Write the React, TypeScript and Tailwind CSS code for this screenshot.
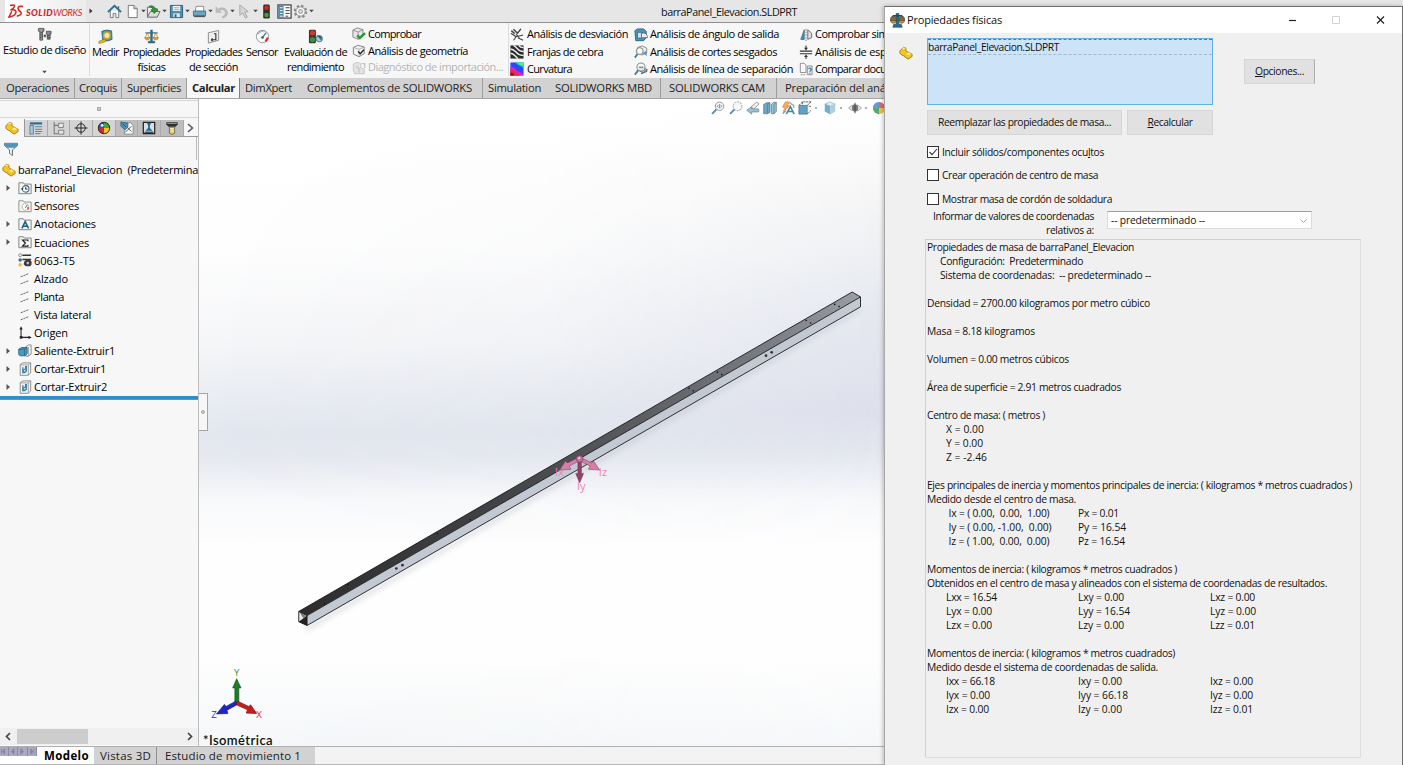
import React, { useLayoutEffect, useRef } from "react";

/* Single-line label whose letter spacing is tuned so it takes exactly `w` pixels. */
function Fit({ w, className = "", children }: { w: number; className?: string; children: React.ReactNode }) {
  const ref = useRef<HTMLSpanElement>(null);
  useLayoutEffect(() => {
    const el = ref.current;
    if (!el) return;
    el.style.letterSpacing = "0px";
    const n = (el.textContent || "").length;
    if (n > 0) el.style.letterSpacing = (w - el.getBoundingClientRect().width) / n + "px";
  }, [w, children]);
  return (
    <span ref={ref} className={"inline-block shrink-0 whitespace-pre " + className}>
      {children}
    </span>
  );
}

const ICONS: Record<string, React.ReactNode> = {
  home: (<g fill="none"><path d="M3.5 7.5V14.5H6.5V10H9.5V14.5H12.5V7.5" fill="#fafafa" stroke="#777" /><path d="M1 8.5L8 2L15 8.5" stroke="#2d6f90" strokeWidth="2" /><path d="M12.2 2.5V5" stroke="#555" strokeWidth="1.5" /></g>),
  page: (<g fill="#fdfdfd" stroke="#777"><path d="M3.5 1.5H9.5L13 5V14.5H3.5Z" /><path d="M9.5 1.5V5H13" fill="#ccc" /></g>),
  open: (<g><path d="M1.5 3.5H6L7 5H12V13.5H1.5Z" fill="#eee" stroke="#666" /><path d="M4.5 8H15L12 14H1.5Z" fill="#ddd" stroke="#666" /><path d="M3 2.5C7 1 10 3 10 6H12.5L8.8 10.2L5.2 6H7.4C7 4 5.5 3 3 2.5Z" fill="#2e9a35" stroke="#176020" strokeWidth=".6" /></g>),
  save: (<g><path d="M1.5 1.5H14.5V14.5H1.5Z" fill="#4a8fb3" stroke="#28607f" /><path d="M4 2H12V7.5H4Z" fill="#f4f4f4" /><path d="M5 4H11M5 6H11" stroke="#888" strokeWidth=".7" /><path d="M4.5 10H11.5V14H4.5Z" fill="#dce8ee" /><path d="M6 11H8V14H6Z" fill="#28607f" /></g>),
  print: (<g><path d="M4.5 2.5H12.5V8H3.5Z" fill="#fff" stroke="#888" /><path d="M1.5 7.5H14.5V12.5H1.5Z" fill="#6aa5c4" stroke="#3d738f" /><path d="M2 12.5H14V14H2Z" fill="#555" /></g>),
  undo: (<path d="M2 3V9H8L6 6.8C9 5 12 6.5 12 9.5C12 11.5 10.5 12.8 9 13.2V15C12.5 14.5 14.6 12 14.4 9C14 4.5 8.5 2.5 4.4 5.4Z" fill="#bdbdbd" stroke="#aaa" strokeWidth=".4" />),
  cursor: (<path d="M3 1V12L6 9.5L9 15L11 14L8.3 8.5L12 8Z" fill="#d6d6d6" stroke="#9a9a9a" strokeWidth=".8" />),
  traffic: (<g><rect x="4.5" y=".5" width="7" height="15" rx="1.5" fill="#3c2a28" /><circle cx="8" cy="4" r="2.4" fill="#d42a20" /><circle cx="8" cy="11.8" r="2.4" fill="#2faa3a" /></g>),
  options: (<g><rect x="1" y="1" width="14" height="14" fill="#fff" stroke="#333" strokeWidth="1.2" /><path d="M1.5 1.5H7V14.5H1.5Z" fill="#4d88a8" /><path d="M3 4H6M3 7H6M3 10H6M3 13H6" stroke="#fff" /><path d="M9 4H13.5M9 7H13.5M9 10H13.5M9 13H12" stroke="#333" /></g>),
  gear: (<g fill="none"><circle cx="8" cy="8" r="6" stroke="#8a8a8a" strokeWidth="2.4" strokeDasharray="2.5 2.2" /><circle cx="8" cy="8" r="5" fill="#f3f3f3" stroke="#888" /><circle cx="8" cy="8" r="2" stroke="#888" fill="#e4e4e4" /></g>),
  bolts: (<g fill="#6d6d6d" stroke="#333" strokeWidth=".7"><path d="M1.5 1.5H7.5V4.5H6V14H3V4.5H1.5Z" fill="#9a9a9a" /><path d="M3 6.5L6 5.5M3 9L6 8M3 11.5L6 10.5" /><path d="M10 4.5H15V7.5H14V13H11V7.5H10Z" fill="#8a8a8a" /><path d="M11 9.5L14 8.5M11 12L14 11" /><path d="M7 9.5H10M8.5 8V11" stroke="#222" strokeWidth="1" /></g>),
  tape: (<g><path d="M4 2.5Q9 0 14.5 2L15 11Q11 14 5 12Z" fill="#4d97bd" stroke="#27566e" strokeWidth=".8" /><circle cx="9.5" cy="7" r="3.4" fill="#f5e9a8" stroke="#d3a81d" strokeWidth="1.4" /><path d="M1 13L8 10.5V13.5L1 15.5Z" fill="#e8b923" stroke="#8f6d0c" strokeWidth=".6" /></g>),
  scale: (<g><path d="M7 1H9V13H11.5V15H4.5V13H7Z" fill="#2d6d91" stroke="#1d4a63" strokeWidth=".4" /><path d="M1.5 4.2H14.5" stroke="#2d6d91" strokeWidth="1.4" /><path d="M3.5 4.5L1 9.5H6ZM12.5 4.5L10 9.5H15Z" fill="none" stroke="#c48a17" strokeWidth=".8" /><path d="M.6 9.2H6.4Q5.8 11.8 3.5 11.8T.6 9.2M9.6 9.2H15.4Q14.8 11.8 12.5 11.8T9.6 9.2" fill="#e0a32b" stroke="#8a600f" strokeWidth=".4" /></g>),
  scaleDark: (<g><path d="M6.5 .5H9.5V12H12L13 15.2H3L4 12H6.5Z" fill="#2a6c94" stroke="#123d55" strokeWidth=".6" /><path d="M3 3H13" stroke="#1b4c69" strokeWidth="1.8" /><path d="M3.5 3A3.6 4.2 0 0 0 .6 8.5H6.6A3.6 4.2 0 0 0 3.5 3ZM12.5 3A3.6 4.2 0 0 0 9.6 8.5H15.5A3.6 4.2 0 0 0 12.5 3Z" fill="#7c6a4a" stroke="#333" strokeWidth=".6" /><path d="M.4 8H6.8Q6 11 3.5 11T.4 8M9.3 8H15.7Q15 11 12.5 11T9.3 8" fill="#c39440" stroke="#4b3a18" strokeWidth=".5" /></g>),
  section: (<g><path d="M2.5 4L13.5 1.5V12L2.5 15Z" fill="#efefef" stroke="#8a8a8a" /><path d="M5.5 11.5H10.5V5H8.5M5.5 11.5L7 10M5.5 11.5L7 13" fill="none" stroke="#333" strokeWidth="1.2" /></g>),
  gauge: (<g><circle cx="8" cy="8" r="6.6" fill="#fafafa" stroke="#999" strokeWidth="1" /><path d="M2.8 5.5A6 6 0 0 1 10 2.6" fill="none" stroke="#5f9ab8" strokeWidth="1.8" strokeDasharray="1.5 1" /><path d="M13.6 9A6 6 0 0 1 11 13" fill="none" stroke="#d8342c" strokeWidth="2.4" /><path d="M8 9L12 3.8" stroke="#3c7fa3" strokeWidth="1.5" /><circle cx="8" cy="9" r="1.4" fill="#555" /></g>),
  perf: (<g><rect x="1" y=".8" width="7.4" height="14.5" rx="1.4" fill="#46322e" /><circle cx="4.7" cy="4.2" r="2.7" fill="#d5382c" /><circle cx="4.7" cy="11.4" r="2.7" fill="#2d9d3c" /><circle cx="12" cy="10.3" r="3.4" fill="#a9cbdc" stroke="#447790" /><path d="M9 6.5L14.5 12.5V8Z" fill="#2c6080" /></g>),
  check: (<g><path d="M1 3.5L6 1L12.5 3V10.5L7 14L1 11.5Z" fill="#e6e6e6" stroke="#666" strokeWidth=".8" /><path d="M1 3.5L7 5.8L12.5 3M7 5.8V14" fill="none" stroke="#777" strokeWidth=".8" /><path d="M6 9.5L9 12.5L15 7" fill="none" stroke="#2c9b31" strokeWidth="3" /></g>),
  geom: (<g><path d="M1.5 4L7 1.5L14 3.5V11L8 14.5L1.5 11.5Z" fill="#f3f3f3" stroke="#666" strokeWidth=".9" /><path d="M1.5 4L8 6L14 3.5M8 6V14.5" fill="none" stroke="#999" strokeWidth=".8" /><path d="M7 8.5L9.5 11L13.5 6.5" fill="none" stroke="#222" strokeWidth="1.6" /></g>),
  diag: (<g fill="#e3e3e3" stroke="#c4c4c4"><path d="M1.5 3.5L6 1.5L10 3V8L14 9V14.5H3L1.5 11Z" /><path d="M5 6L8 9V13M11 3H14.5V8" fill="none" strokeWidth="1.6" /></g>),
  deviation: (<g stroke="#444" fill="none"><path d="M1 6L7 10L4 14M7 10L15 8" strokeWidth="1.3" /><path d="M4 1.5L8.5 6M1.5 3L5.5 6.5M12.5 1L8 6.5" strokeWidth="1.7" /><path d="M9.5 11.5L15 14M7 7L11 12" strokeWidth="1.3" /></g>),
  zebra: (<g><path d="M.5 .5H15.5V15.5H.5Z" fill="#2b2b2b" /><path d="M.5 4.5C5 4.5 6 8 9.5 10.5C12 12 14 12 15.5 12M4 .5C7 2 9 5.5 11 6.5S14 7.5 15.5 7.5M.5 9.5C4 9.5 5.5 12.5 9 15.5M10 .5C11.5 2.5 13.5 3 15.5 3" fill="none" stroke="#eee" strokeWidth="1.7" /></g>),
  curvature: (<g><path d="M.5 .5H15.5V15.5H.5Z" fill="#2b4df0" /><path d="M.5 .5H7C8 4 12 3 15.5 7V.5H7" fill="#16d5f5" /><path d="M9 .5H15.5V4Q11 4 9 .5" fill="#5ff36a" /><path d="M.5 5C6 5 6 10 10 11S14 13 15.5 15.5H.5Z" fill="#d81fe8" /><path d="M.5 8C4 8 5 11 8 12.5S10 14 10.5 15.5H.5Z" fill="#f0283a" /><path d="M.5 12Q4 12 5 15.5H.5Z" fill="#7c1d12" /></g>),
  draft: (<g><path d="M1 3L4 1H11L14 4V11L11 14.5H2Z" fill="#4e94b8" stroke="#2b5f7b" /><path d="M4 5H9V11.5H4Z" fill="#cfe2ec" stroke="#2b5f7b" strokeWidth=".8" /><path d="M8.5 6Q15 4.5 15.5 11H8.5Z" fill="#eee" stroke="#555" strokeWidth=".8" /></g>),
  undercut: (<g><path d="M4 3L9 1L14.5 3.5V9L9 11.5L4 9Z" fill="#eee" stroke="#777" strokeWidth=".9" /><circle cx="6.5" cy="7" r="4" fill="#f5fafc" fillOpacity=".8" stroke="#777" /><path d="M4 10.5L1 14.5" stroke="#3f83a5" strokeWidth="2.2" /><path d="M9.5 9L14.5 6.5V12.5Z" fill="#5a9cbc" /></g>),
  parting: (<g><path d="M5 9L10 6L15.5 9L10 12.5Z" fill="#9ec4d6" stroke="#555" strokeWidth=".9" /><circle cx="8" cy="5.8" r="4.6" fill="#f7f9fa" fillOpacity=".75" stroke="#777" /><path d="M4.8 9.5L1 14.5" stroke="#3f83a5" strokeWidth="2.2" /><path d="M8 13.5L15 10.5M5.5 6H10.5" stroke="#666" strokeWidth="1.3" /></g>),
  symmetry: (<g><path d="M2 13L6 2V13Z" fill="#4b93b9" stroke="#2b5f7b" strokeWidth=".8" /><path d="M8 1V15" stroke="#777" strokeDasharray="2 1" /><path d="M10 2L14.5 6V11L10 13Z" fill="#ddd" stroke="#555" strokeWidth=".9" /></g>),
  thickness: (<g stroke="#333" fill="#333"><path d="M1 7H15M1 10H15" strokeWidth="1.3" /><path d="M8 .5V4M8 16V13" strokeWidth="1.2" /><path d="M5.8 3.2H10.2L8 6.2ZM5.8 13.8H10.2L8 10.8Z" stroke="none" /></g>),
  compare: (<g><path d="M1.5 1.5H6L8 3.5V12H1.5Z" fill="#f7f7f7" stroke="#888" /><path d="M9.5 4.5H15V14.5H9.5Z" fill="#e5eef3" stroke="#888" /><path d="M11 8Q12.5 6 13.6 7.6T12.2 11M12.2 12.3V13.3" stroke="#2d7196" strokeWidth="1.3" fill="none" /><path d="M2 14.5H8" stroke="#888" strokeDasharray="2 1" /></g>),
  part: (<g><path d="M1 5.5L3 3.5L5 1.5L8 2.5V5.5L10.5 7L15 9.5V12L10.5 15L6.5 12.5V11.5L4.5 11L1 8.5Z" fill="#f5c61d" stroke="#8a6505" strokeWidth=".8" /><path d="M5 1.5L8 2.5L5.5 4.5L3 3.5ZM10.5 7L14.8 9L10.8 11.2L6.8 9Z" fill="#fdea87" stroke="#c9990f" strokeWidth=".4" /></g>),
  props: (<g><path d="M1 1.5H15V4H1Z" fill="#2e6e90" /><path d="M1 5H5V15H1Z" fill="#a9c8d8" stroke="#2e6e90" strokeWidth=".8" /><path d="M7 6.5H15M7 9.5H15M7 12H15M7 14.5H13" stroke="#3b7fa2" /></g>),
  config: (<g fill="none" stroke="#777"><path d="M2.5 1V14.5H7M2.5 5H7" strokeWidth="1.2" /><path d="M7.5 2.5H14M7.5 2.5V7.5H13V4" fill="#e8e8e8" /><path d="M7.5 10.5H13.5V15H7.5Z" fill="#e8e8e8" /></g>),
  target: (<g fill="none" stroke="#222" strokeWidth="1.1"><circle cx="8" cy="8" r="4.8" /><path d="M8 .5V15.5M.5 8H15.5" /></g>),
  ball: (<g><circle cx="8" cy="8" r="6.8" fill="#222" /><path d="M8 8L1.2 8A6.8 6.8 0 0 1 8 1.2Z" fill="#2f57b0" /><path d="M8 1.2A6.8 6.8 0 0 1 14.8 8H8Z" fill="#3aa745" /><path d="M14.8 8A6.8 6.8 0 0 1 8 14.8V8Z" fill="#f0c52a" /><path d="M8 14.8A6.8 6.8 0 0 1 1.2 8L8 8Z" fill="#c7302c" /><circle cx="5.8" cy="5" r="1.7" fill="#dfe8f7" /><circle cx="8" cy="8" r="6.5" fill="none" stroke="#222" strokeWidth=".9" /></g>),
  ballLight: (<g><circle cx="8" cy="8" r="7" fill="#ddd" /><path d="M8 8H1A7 7 0 0 1 8 1Z" fill="#5a8bd6" /><path d="M8 1A7 7 0 0 1 15 8H8Z" fill="#e4555c" /><path d="M15 8A7 7 0 0 1 8 15V8Z" fill="#f1b93c" /><path d="M8 15A7 7 0 0 1 1 8H8Z" fill="#43a457" /></g>),
  simx: (<g><path d="M5 2H12L15 5V15H5Z" fill="#f6f6f6" stroke="#888" /><path d="M1 1L9 2.5V7L6 10L1 6Z" fill="#4b93b9" stroke="#22566f" strokeWidth=".8" /><path d="M6 13L13 6M9 8L13 12M3 3L7 7" stroke="#333" strokeWidth=".9" /></g>),
  stamp: (<g><path d="M1.5 1.5H14.5V14.5H1.5Z" fill="#d7e0e5" stroke="#222" strokeWidth="1.4" /><path d="M5.5 2H10.5L9 5V8L12 11H4L7 8V5Z" fill="#24668c" /><path d="M3 12.8H13" stroke="#222" strokeWidth="1.3" /></g>),
  torch: (<g><path d="M1.5 1.5H14.5V4L12 6.5H4L1.5 4Z" fill="#2f2f2f" /><path d="M2.5 2.7H13.5" stroke="#aaa" /><path d="M5 7H11V14L8 15.5L5 14Z" fill="#e7c95a" stroke="#555" strokeWidth=".8" /><path d="M6 9H10M7 11.5H10" stroke="#fff" /></g>),
  filter: (<g><path d="M.5 1.5H15.5V4L9.7 9V15.5L6.3 13V9L.5 4Z" fill="#e3edf2" stroke="#555" strokeWidth=".9" /><path d="M1 2H15V4L12 6.5H4L1 4Z" fill="#4e96ba" /></g>),
  folderHist: (<g><path d="M1 14.5V2H6L7 3.5H15V14.5Z" fill="#f4f4f4" stroke="#777" /><circle cx="8.8" cy="9" r="3.7" fill="#fff" stroke="#2d6584" strokeWidth="1.2" /><path d="M8.8 7V9.3H10.8" stroke="#222" fill="none" strokeWidth="1.1" /><path d="M3 8.5L4.8 10.2L6.4 8.5" fill="#222" /></g>),
  folderSens: (<g><path d="M1 14.5V2H6L7 3.5H15V14.5Z" fill="#f4f4f4" stroke="#888" /><circle cx="8.4" cy="9" r="3.7" fill="#fff" stroke="#888" strokeDasharray="1.5 .8" /><path d="M8.4 10L10.5 6.8" stroke="#444" /><path d="M11.6 9V12" stroke="#d8342c" strokeWidth="1.6" /></g>),
  folderA: (<g><path d="M1 14.5V2H6L7 3.5H15V14.5Z" fill="#f4f4f4" stroke="#777" /><path d="M4.5 13L8.2 5.2L12 13M5.8 10.5H10.6" fill="none" stroke="#235e80" strokeWidth="1.8" /></g>),
  folderSum: (<g><path d="M1 14.5V2H6L7 3.5H15V14.5Z" fill="#f4f4f4" stroke="#777" /><path d="M11.3 7V5.7H5.2L8.4 9.2L5.2 12.6H11.3V11.3" fill="none" stroke="#222" strokeWidth="1.4" /></g>),
  material: (<g><circle cx="2.5" cy="2.5" r="1.7" fill="#eee" stroke="#777" strokeWidth=".8" /><circle cx="2.5" cy="8" r="2" fill="#2d7196" /><circle cx="2.5" cy="13.4" r="2" fill="#f0c02a" /><path d="M5 2.5H15M5 7.5H15" stroke="#333" strokeWidth="1.6" /><path d="M7 10L9 8H14L15.5 10V13L14 15.2H9L6.5 13Z" fill="#3d3d3d" /><circle cx="11.2" cy="11.5" r="1.6" fill="#bbb" /></g>),
  plane: (<path d="M3 5.5L12 2M3 13.5L12 10" fill="none" stroke="#666" strokeWidth="1.1" strokeDasharray="2.6 .8" />),
  origin: (<g fill="#222" stroke="#222"><path d="M3.5 3V13H13" fill="none" strokeWidth="1.2" /><path d="M3.5 .3L5.4 4H1.6ZM15.7 13L12 14.9V11.1Z" stroke="none" /><rect x="2" y="11.5" width="3" height="3" stroke="none" /></g>),
  extrude: (<g><path d="M9 3L12 1H15V11.5L11.5 14H9Z" fill="#f1f1f1" stroke="#777" strokeWidth=".9" /><path d="M12 3.5V13.5" stroke="#888" strokeWidth=".8" /><path d="M.8 6L4 4H10.5V11L8 13.5H2.5L.8 12Z" fill="#4b98bf" stroke="#23607f" strokeWidth=".9" /><path d="M.8 6H7.5V13.5M7.5 6L10.5 4" fill="none" stroke="#23607f" strokeWidth=".8" /></g>),
  cut: (<g><path d="M2.5 3L5.5 1H14.5V12.5L11.5 15.2H2.5Z" fill="#f1f1f1" stroke="#777" strokeWidth=".9" /><path d="M11.8 15V3.3H2.5M11.8 3.3L14.5 1" fill="none" stroke="#888" strokeWidth=".8" /><path d="M4.8 6H6.3V8.5L8 7.5V4.5H10.2V11L7.5 12.8H4.8Z" fill="#2d7ea6" /><path d="M6.6 9.5L8.6 8.6V10.8H6.6Z" fill="#d5e8f1" /></g>),
  zoomFit: (<g><circle cx="9.8" cy="6" r="4.8" fill="#f2f8fb" stroke="#8a8a8a" strokeWidth="1.1" /><path d="M8.6 4.4L7.2 6L8.6 7.6M11 4.4L12.4 6L11 7.6M9.8 3.6V8.4" fill="none" stroke="#666" strokeWidth=".9" /><path d="M6.2 9.6L1.2 14.7" stroke="#3e86ab" strokeWidth="2.2" /></g>),
  zoomArea: (<g><circle cx="9.8" cy="6" r="5" fill="#f5f9fb" stroke="#aaa" strokeWidth="1.2" strokeDasharray="2.4 .8" /><path d="M6.2 9.6L1.2 14.7" stroke="#3e86ab" strokeWidth="2.2" /></g>),
  prevView: (<g><path d="M6 6.5L12.5 1L15 3.5L8.5 9.5Z" fill="#eee" stroke="#888" /><path d="M.8 10.5L6.5 6.5V9H14.5V12.5H6.5V15Z" fill="#8bbdd5" stroke="#5b7682" strokeWidth=".8" /></g>),
  sectionView: (<g><path d="M.8 4L4 2H8V13L5 14.5H.8Z" fill="#5aa0c3" stroke="#41616f" strokeWidth=".8" /><path d="M5 4V14.5M5 4L8 2" stroke="#41616f" strokeWidth=".7" /><path d="M9.5 4L12 1.5H15.2V12L12.5 14.5H9.5Z" fill="#8bbdd5" stroke="#41616f" strokeWidth=".8" /><path d="M12.5 4V14.5M12.5 4L15.2 1.5" stroke="#41616f" strokeWidth=".7" /></g>),
  dynamic: (<g><path d="M5 1L1.5 7H5L2.5 12L10 5.5H7L10 1Z" fill="#f5a93a" stroke="#b4562a" strokeWidth=".6" /><path d="M10 2L14.5 5V8" fill="none" stroke="#999" strokeWidth="1.5" /><path d="M6 15L10.8 6.5L15 15M7.5 12H13.5" fill="none" stroke="#2f7aa0" strokeWidth="1.8" /><path d="M2 14.5L5.5 11" stroke="#777" strokeWidth="1.4" /></g>),
  orient: (<g><path d="M1 5H10.5V15H1Z" fill="#4e99be" stroke="#315d73" strokeWidth=".8" /><path d="M1 5L5 1H15M10.5 5L15 1M15 6H11.5M15 10.5L10.5 15M5 1V4.5" fill="none" stroke="#444" strokeWidth="1" strokeDasharray="2.6 .7" /></g>),
  display: (<g><path d="M2 3.5L7.5 1L14 3.5L8.5 6Z" fill="#d6e9f2" stroke="#789" strokeWidth=".6" /><path d="M2 3.5L8.5 6V15.5L2 12Z" fill="#64a6c8" /><path d="M14 3.5L8.5 6V15.5L14 12Z" fill="#a3cbdf" /></g>),
  eye: (<g><path d="M.5 8Q8 0 15.5 8Q8 15.5 .5 8Z" fill="#e4e4e4" stroke="#999" /><circle cx="8" cy="8" r="3.6" fill="#666" /><path d="M8 2V14" stroke="#333" strokeWidth="1.1" /></g>),
};

function Icon({ n, s = 15 }: { n: string; s?: number }) {
  return (
    <svg width={s} height={s} viewBox="0 0 16 16" className="block shrink-0">
      {ICONS[n]}
    </svg>
  );
}

function Caret() {
  return (
    <svg width="5" height="4" viewBox="0 0 5 4" className="block shrink-0">
      <path d="M.3 .8H4.7L2.5 3.3Z" fill="#444" />
    </svg>
  );
}

function QuickBar() {
  const items: [string, boolean, string][] = [
    ["home", false, "w-[18px]"], ["page", true, "w-[21px]"], ["open", true, "w-[23px]"], ["save", true, "w-[23px]"],
    ["print", true, "w-[22px]"], ["undo", true, "w-[23px]"], ["cursor", true, "w-[22px]"], ["traffic", false, "w-[18px]"],
    ["options", false, "w-[16px]"], ["gear", true, "w-[23px]"],
  ];
  return (
    <div className="flex h-[23px] w-full items-center border-b border-[#8f8f8f] bg-[#e6e6e6]">
      <div className="ml-[5px] flex h-full w-[81px] items-center bg-linear-to-r from-white to-[#ececec] pl-[3px]">
        <svg width="16" height="15" viewBox="0 0 16 15" className="mr-[2px] block">
          <path d="M2 1.5Q7 0 6.5 2.5Q5.5 5 2.5 6Q8 5 8 8Q7.5 12 1 13L3.8 7.4M15 2.5Q10 1.5 10 4.5Q10.5 6.5 12.8 8Q14.5 11 8.8 12.2" fill="none" stroke="#d4221f" strokeWidth="1.5" />
        </svg>
        <Fit w={27} className="mt-[3px] font-['Lato'] text-[9px] font-black italic text-[#d4221f]">SOLID</Fit>
        <Fit w={29} className="mt-[3px] font-['Lato'] text-[9px] italic text-[#d4221f]">WORKS</Fit>
      </div>
      <svg width="6" height="8" viewBox="0 0 6 8" className="ml-[2px] block"><path d="M1.5 1.5L4.5 4L1.5 6.5Z" fill="#333" /></svg>
      <div className="ml-[13px] flex items-center">
        {items.map(([n, c, w]) => (
          <div key={n} className={"flex items-center gap-[1px] " + w}>
            <Icon n={n} s={15} />
            {c && <Caret />}
          </div>
        ))}
      </div>
      <Fit w={136} className="ml-[345px] mt-[2px] text-[10.8px] text-[#111]">barraPanel_Elevacion.SLDPRT</Fit>
    </div>
  );
}

function BigButton({ icon, lines, cls }: { icon: string; lines: [string, number][]; cls: string }) {
  return (
    <div className={"flex shrink-0 flex-col items-center pt-[6px] " + cls}>
      <Icon n={icon} s={15} />
      {lines.map(([t, w]) => (
        <Fit key={t} w={w} className="h-[15px] text-[11px] leading-[15px]">{t}</Fit>
      ))}
    </div>
  );
}

function RibbonList({ rows, cls, gap }: { rows: [string, string, number][]; cls: string; gap: string }) {
  return (
    <div className={"flex shrink-0 flex-col pt-[3px] " + cls}>
      {rows.map(([i, t, w]) => (
        <div key={t} className={"flex h-[17.4px] items-center " + gap}>
          <Icon n={i} s={14} />
          <Fit w={w} className={i === "diag" ? "text-[11px] text-[#b5b5b5]" : "text-[11px]"}>{t}</Fit>
        </div>
      ))}
    </div>
  );
}

function Ribbon() {
  return (
    <div className="flex h-[55px] w-full overflow-hidden bg-[#f7f7f7]">
      <div className="flex h-[53px] w-[90px] shrink-0 flex-col items-center border-r border-[#dcdcdc] pt-[4px]">
        <Icon n="bolts" s={15} />
        <Fit w={83} className="h-[15px] text-[11px] leading-[15px]">Estudio de diseño</Fit>
        <div className="mt-[13px]"><Caret /></div>
      </div>
      <BigButton icon="tape" cls="w-[31px]" lines={[["Medir", 27]]} />
      <BigButton icon="scale" cls="w-[61px]" lines={[["Propiedades", 57], ["físicas", 28]]} />
      <BigButton icon="section" cls="w-[63px]" lines={[["Propiedades", 57], ["de sección", 49]]} />
      <BigButton icon="gauge" cls="w-[34px]" lines={[["Sensor", 32]]} />
      <BigButton icon="perf" cls="w-[73px]" lines={[["Evaluación de", 63], ["rendimiento", 57]]} />
      <RibbonList cls="h-[53px] w-[157px] border-r border-[#dcdcdc]" gap="gap-[2px]" rows={[["check", "Comprobar", 53], ["geom", "Análisis de geometría", 100], ["diag", "Diagnóstico de importación...", 135]]} />
      <RibbonList cls="w-[125px] pl-[1px]" gap="gap-[3px]" rows={[["deviation", "Análisis de desviación", 101], ["zebra", "Franjas de cebra", 76], ["curvature", "Curvatura", 45]]} />
      <RibbonList cls="w-[165px]" gap="gap-[2px]" rows={[["draft", "Análisis de ángulo de salida", 129], ["undercut", "Análisis de cortes sesgados", 127], ["parting", "Análisis de línea de separación", 143]]} />
      <RibbonList cls="w-[140px]" gap="gap-[2px]" rows={[["symmetry", "Comprobar simetría", 94], ["thickness", "Análisis de espesor", 93], ["compare", "Comparar documentos", 106]]} />
    </div>
  );
}

function RibbonTabs() {
  const tabs: [string, number, string][] = [
    ["Operaciones", 63, "w-[75px] pl-[6px] border-r border-[#9d9d9d]"],
    ["Croquis", 38, "w-[47px] pl-[4px] border-r border-[#9d9d9d]"],
    ["Superficies", 54, "w-[65px] pl-[5px] border-r border-[#9d9d9d]"],
    ["Calcular", 43, "w-[53px] pl-[5px] border-r border-[#808080] bg-[#f7f7f7] font-bold"],
    ["DimXpert", 47, "w-[62px] pl-[5px]"],
    ["Complementos de SOLIDWORKS", 165, "w-[181px] pl-[5px] border-r border-[#9d9d9d]"],
    ["Simulation", 53, "w-[67px] pl-[5px]"],
    ["SOLIDWORKS MBD", 97, "w-[111px] pl-[5px] border-r border-[#9d9d9d]"],
    ["SOLIDWORKS CAM", 96, "w-[116px] pl-[8px] border-r border-[#9d9d9d]"],
    ["Preparación del análisis", 119, "w-[160px] pl-[8px]"],
  ];
  return (
    <div className="flex h-[21px] w-full overflow-hidden border-b border-[#a5a5a5] bg-[#d2d2d2] text-[11.3px] text-[#222]">
      {tabs.map(([t, w, c]) => (
        <div key={t} className={"flex shrink-0 items-center pt-px " + c}><Fit w={w}>{t}</Fit></div>
      ))}
    </div>
  );
}

function SidePanel() {
  const panelTabs = ["props", "config", "target", "ball", "simx", "stamp", "torch"];
  const rows: [boolean, string, string, number][] = [
    [true, "folderHist", "Historial", 41], [false, "folderSens", "Sensores", 45], [true, "folderA", "Anotaciones", 62],
    [true, "folderSum", "Ecuaciones", 55], [false, "material", "6063-T5", 41], [false, "plane", "Alzado", 34],
    [false, "plane", "Planta", 30], [false, "plane", "Vista lateral", 57], [false, "origin", "Origen", 34],
    [true, "extrude", "Saliente-Extruir1", 81], [true, "cut", "Cortar-Extruir1", 72], [true, "cut", "Cortar-Extruir2", 73],
  ];
  return (
    <div className="flex h-full w-[199px] shrink-0 flex-col overflow-hidden border-r border-[#bdbdbd] bg-[#f7f7f7]">
      <div className="mt-[1px] flex h-[18px] w-full items-center justify-center border-y border-[#d5d5d5]">
        <div className="size-[4px] border border-[#aaa] bg-[#ccc]" />
      </div>
      <div className="mt-[2px] flex h-[17px] w-full items-center border-b border-[#9a9a9a]">
        <div className="flex h-[18px] w-[25px] items-center justify-center border-r border-[#999] bg-[#f7f7f7]"><Icon n="part" s={14} /></div>
        {panelTabs.map((n) => (
          <div key={n} className={(n === "stamp" || n === "torch" || n === "simx" ? "bg-[#bdbdbd]" : "bg-[#d4d4d4]") + " flex h-full w-[22.7px] items-center justify-center border-r border-[#aaa]"}>
            <Icon n={n} s={14} />
          </div>
        ))}
        <svg width="14" height="14" viewBox="0 0 14 14"><path d="M4 3L8.5 7L4 11" fill="none" stroke="#555" strokeWidth="1.5" /></svg>
      </div>
      <div className="flex h-[23px] w-[197px] shrink-0 items-center border-r border-[#bbb] pl-[4px]"><Icon n="filter" s={14} /></div>
      <div className="flex h-[19px] shrink-0 items-center gap-[2px] pl-[2px] pt-px">
        <Icon n="part" s={14} />
        <Fit w={180} className="text-[11px]">{"barraPanel_Elevacion  (Predetermina"}</Fit>
      </div>
      {rows.map(([arrow, icon, t, w]) => (
        <div key={t} className="flex h-[18.1px] shrink-0 items-center pl-[5px]">
          <div className="w-[13px]">
            {arrow && <svg width="6" height="8" viewBox="0 0 6 8"><path d="M1.5 1L5 4L1.5 7Z" fill="#555" /></svg>}
          </div>
          <Icon n={icon} s={14} />
          <Fit w={w} className="ml-[2px] mt-px text-[11px]">{t}</Fit>
        </div>
      ))}
      <div className="h-[4px] w-full shrink-0 border-b border-[#7c86c4] bg-[#2f8dcb]" />
      <div className="flex-1" />
      <div className="flex h-[17px] w-full shrink-0 items-center bg-[#f0f0f0]">
        <svg width="17" height="15" viewBox="0 0 17 15"><path d="M10 4L6.5 7.5L10 11" fill="none" stroke="#444" strokeWidth="1.7" /></svg>
        <div className="h-[15px] w-[71px] bg-[#cdcdcd]" />
        <div className="flex-1" />
        <svg width="17" height="15" viewBox="0 0 17 15"><path d="M7 4L10.5 7.5L7 11" fill="none" stroke="#444" strokeWidth="1.7" /></svg>
      </div>
      <div className="h-px shrink-0" />
    </div>
  );
}

const leftStops: [number, string][] = [[0, "#fff"], [0.23, "#fefefe"], [0.38, "#f5f6f8"], [0.45, "#ebeef3"], [0.515, "#e3e7ef"], [0.555, "#e6e9f0"], [0.62, "#f8f9fb"], [0.69, "#fefefe"], [0.86, "#fefefe"], [1, "#f5f7f9"]];
const rightStops: [number, string][] = [[0, "#fff"], [0.06, "#fdfdfd"], [0.15, "#f6f6f7"], [0.23, "#eef0f3"], [0.34, "#e4e7ef"], [0.48, "#dddfeb"], [0.54, "#e2e5ee"], [0.62, "#f7f8fa"], [0.69, "#fefefe"], [0.86, "#fefefe"], [1, "#f5f7f9"]];

function Scene() {
  const topHoles = [[1453, 497], [1463, 502], [1388, 536], [1398, 542], [1185, 661], [1195, 667], [1120, 700], [1130, 706], [620, 1018], [545, 1052], [340, 1175], [287, 1221]];
  const sideHoles = [[1296, 621], [1309, 613], [451, 1136], [465, 1128]];
  return (
    <svg width="686" height="648" viewBox="0 0 1568 1568" preserveAspectRatio="none" className="block">
      <defs>
        <linearGradient id="bgL" x1="0" y1="0" x2="0" y2="1">{leftStops.map(([o, c]) => <stop key={o} offset={o} stopColor={c} />)}</linearGradient>
        <linearGradient id="bgR" x1="0" y1="0" x2="0" y2="1">{rightStops.map(([o, c]) => <stop key={o} offset={o} stopColor={c} />)}</linearGradient>
        <linearGradient id="fade"><stop offset="0" stopColor="#000" /><stop offset=".5" stopColor="#333" /><stop offset="1" stopColor="#fff" /></linearGradient>
        <mask id="toRight"><rect width="1568" height="1568" fill="url(#fade)" /></mask>
        <linearGradient id="topFace"><stop offset="0" stopColor="#2d2d2f" /><stop offset=".35" stopColor="#414245" /><stop offset=".6" stopColor="#5a5c60" /><stop offset=".85" stopColor="#7c7f85" /><stop offset="1" stopColor="#9a9ea5" /></linearGradient>
        <filter id="soft"><feGaussianBlur stdDeviation="6" /></filter>
      </defs>
      <rect width="1568" height="1568" fill="url(#bgL)" />
      <rect width="1568" height="1568" fill="url(#bgR)" mask="url(#toRight)" />
      <path d="M240 1278L1512 503V515L247 1290Z" fill="#9aa1ad" opacity=".25" filter="url(#soft)" />
      <path d="M228 1240L247 1250V1274L228 1265Z" fill="#e8eaee" />
      <path d="M228 1265L247 1250V1274Z" fill="#222" />
      <path d="M230 1242L245 1251L238 1256Z" fill="#777" />
      <path d="M228 1240L1493 467L1512 479L247 1250Z" fill="url(#topFace)" />
      <path d="M247 1250L1512 479V503L247 1274Z" fill="#c3c9d2" />
      <g fill="none" stroke="#111" strokeWidth="2">
        <path d="M228 1240L1493 467L1512 479L247 1250ZM228 1240V1265L247 1274V1250M1512 479V503" />
        <path d="M247 1274L1512 503" />
      </g>
      {topHoles.map(([x, y]) => <circle key={x} cx={x} cy={y} r="2" fill="#15161a" />)}
      {sideHoles.map(([x, y]) => <circle key={x} cx={x} cy={y} r="3.2" fill="#33363c" />)}
      <g stroke="#7d3357" strokeWidth="1.2" fill="#b86690">
        <path d="M868 867L842 881L838 876L824 898L850 896L846 888L871 875Z" fill="#d480a8" />
        <path d="M872 867L898 881L902 876L916 898L890 896L894 888L869 875Z" fill="#d480a8" />
        <path d="M866 872V906H861L870 929L879 906H874V872Z" fill="#8e4168" />
        <circle cx="870" cy="871" r="8" fill="#c06f98" />
        <circle cx="869" cy="869" r="2.5" fill="#f3d5e3" stroke="none" />
      </g>
      <g fill="#f27fb8" fontFamily="Open Sans" fontSize="25">
        <text x="814" y="912">Ix</text><text x="864" y="945">Iy</text><text x="914" y="912">Iz</text>
      </g>
      <g strokeWidth="1.5">
        <path d="M82 1461V1425H77L86 1403L96 1425H91V1461Z" fill="#1f7d27" stroke="#0f4b16" />
        <path d="M84 1457L62 1470L58 1465L40 1488L66 1487L64 1479L88 1465Z" fill="#2026c4" stroke="#12166e" />
        <path d="M88 1457L114 1470L118 1466L132 1487L108 1486L111 1478L84 1465Z" fill="#c41d1d" stroke="#6d0f0f" />
      </g>
      <g fontFamily="Open Sans" fontSize="22">
        <text x="80" y="1397" fill="#2aa12f">Y</text>
        <text x="28" y="1499" fill="#2230ee">Z</text>
        <text x="131" y="1499" fill="#ee2020">X</text>
      </g>
    </svg>
  );
}

function Viewport() {
  const icons: [string, boolean, string][] = [
    ["zoomFit", false, "w-[17.5px]"], ["zoomArea", false, "w-[17.5px]"], ["prevView", false, "w-[17px]"], ["sectionView", false, "w-[17.5px]"],
    ["dynamic", false, "w-[17px]"], ["orient", true, "w-[25px]"], ["display", true, "w-[25px]"], ["eye", true, "w-[24px]"], ["ballLight", false, "w-[16px]"],
  ];
  return (
    <div className="relative h-full flex-1 overflow-hidden">
      <Scene />
      <div className="absolute left-[512px] top-[2px] flex h-[14px] items-center">
        {icons.map(([n, c, w]) => (
          <div key={n} className={"flex shrink-0 items-center gap-[3px] opacity-90 " + w}>
            <Icon n={n} s={14} />
            {c && <div className="h-[2px] w-[2px] bg-[#aaa]" />}
          </div>
        ))}
      </div>
      <div className="absolute left-[-1px] top-[294px] flex h-[38px] w-[10px] items-center justify-center border-y border-r border-[#a5a5a5] bg-[#f7f7f7]">
        <div className="size-[4px] rounded-full border border-[#aaa] bg-[#ccc]" />
      </div>
      <div className="absolute left-[4px] top-[632px] h-[16px] leading-[16px]">
        <Fit w={70} className="font-['Lato'] text-[13px] font-semibold text-[#111]">*Isométrica</Fit>
      </div>
    </div>
  );
}

function BottomTabs() {
  return (
    <div className="flex h-[18px] w-full shrink-0 border-t border-[#b0b0b0] bg-[#f3f3f3] text-[11.5px] text-[#222]">
      <div className="flex h-full w-[37px] items-start bg-white">
        {["M5 1.5L2.5 4.5L5 7.5ZM1.5 1.5V7.5", "M5.5 1.5L2.5 4.5L5.5 7.5Z", "M3 1.5L6 4.5L3 7.5Z", "M3 1.5L5.5 4.5L3 7.5ZM6.5 1.5V7.5"].map((d) => (
          <svg key={d} width="9.2" height="9" viewBox="0 0 9 9" className="border-r border-[#8989a2] bg-[#a9a9c4]"><path d={d} fill="#83839b" stroke="#83839b" strokeWidth=".8" /></svg>
        ))}
      </div>
      <div className="flex w-[57px] items-center justify-center bg-[#fdfdfd] pl-[2px] font-bold text-black"><Fit w={45}>Modelo</Fit></div>
      <div className="flex w-[63px] items-center border-r border-[#909090] bg-[#d2d2d2] pl-[6px]"><Fit w={51}>Vistas 3D</Fit></div>
      <div className="flex w-[158px] items-center bg-[#d2d2d2] pl-[8px]"><Fit w={136}>Estudio de movimiento 1</Fit></div>
    </div>
  );
}

function Check({ on, children, cls }: { on?: boolean; children: React.ReactNode; cls: string }) {
  return (
    <div className={"flex h-[12px] items-center gap-[3px] " + cls}>
      <div className="size-[12px] border border-[#333] bg-white">
        {on && <svg width="10" height="10" viewBox="0 0 10 10" className="block"><path d="M1.5 5L4 7.6L9 2" fill="none" stroke="#333" strokeWidth="1.1" /></svg>}
      </div>
      <div className="pt-[2px]">{children}</div>
    </div>
  );
}

type Cell = [string, number];
function Line({ pad = "", cells = [] }: { pad?: string; cells?: Cell[] }) {
  return (
    <div className={"flex h-[14px] items-center " + pad}>
      {cells.map(([t, w], i) => (
        <div key={i} className={cells.length > 1 && i < cells.length - 1 ? (cells.length === 2 ? "w-[129.5px] shrink-0" : "w-[132px] shrink-0") : "shrink-0"}>
          <Fit w={w} className="block h-[14px] leading-[14px]">{t}</Fit>
        </div>
      ))}
    </div>
  );
}

function Report() {
  const a = "pl-[13px]", b = "pl-[19px]", c = "pl-[21.5px]";
  return (
    <div className="ml-[40px] mt-[2px] h-[519px] w-[436px] shrink-0 border border-[#cfcfcf] border-r-[#dedede] border-b-[#dedede] pl-px pt-px text-[10.3px] text-[#111]">
      <Line cells={[["Propiedades de masa de barraPanel_Elevacion", 207]]} />
      <Line pad={a} cells={[["Configuración:  Predeterminado", 143]]} />
      <Line pad={a} cells={[["Sistema de coordenadas:  -- predeterminado --", 211]]} />
      <Line />
      <Line cells={[["Densidad = 2700.00 kilogramos por metro cúbico", 223]]} />
      <Line />
      <Line cells={[["Masa = 8.18 kilogramos", 108]]} />
      <Line />
      <Line cells={[["Volumen = 0.00 metros cúbicos", 142]]} />
      <Line />
      <Line cells={[["Área de superficie = 2.91 metros cuadrados", 194]]} />
      <Line />
      <Line cells={[["Centro de masa: ( metros )", 118]]} />
      <Line pad={b} cells={[["X = 0.00", 38]]} />
      <Line pad={b} cells={[["Y = 0.00", 37]]} />
      <Line pad={b} cells={[["Z = -2.46", 41]]} />
      <Line />
      <Line cells={[["Ejes principales de inercia y momentos principales de inercia: ( kilogramos * metros cuadrados )", 425]]} />
      <Line cells={[["Medido desde el centro de masa.", 149]]} />
      <Line pad={c} cells={[["Ix = ( 0.00,  0.00,  1.00)", 101], ["Px = 0.01", 41]]} />
      <Line pad={c} cells={[["Iy = ( 0.00, -1.00,  0.00)", 103], ["Py = 16.54", 48]]} />
      <Line pad={c} cells={[["Iz = ( 1.00,  0.00,  0.00)", 101], ["Pz = 16.54", 47]]} />
      <Line />
      <Line cells={[["Momentos de inercia: ( kilogramos * metros cuadrados )", 250]]} />
      <Line cells={[["Obtenidos en el centro de masa y alineados con el sistema de coordenadas de resultados.", 400]]} />
      <Line pad={b} cells={[["Lxx = 16.54", 51], ["Lxy = 0.00", 46], ["Lxz = 0.00", 45]]} />
      <Line pad={b} cells={[["Lyx = 0.00", 46], ["Lyy = 16.54", 52], ["Lyz = 0.00", 46]]} />
      <Line pad={b} cells={[["Lzx = 0.00", 46], ["Lzy = 0.00", 46], ["Lzz = 0.01", 45]]} />
      <Line />
      <Line cells={[["Momentos de inercia: ( kilogramos * metros cuadrados)", 248]]} />
      <Line cells={[["Medido desde el sistema de coordenadas de salida.", 231]]} />
      <Line pad={b} cells={[["Ixx = 66.18", 49], ["Ixy = 0.00", 44], ["Ixz = 0.00", 43]]} />
      <Line pad={b} cells={[["Iyx = 0.00", 44], ["Iyy = 66.18", 50], ["Iyz = 0.00", 43]]} />
      <Line pad={b} cells={[["Izx = 0.00", 43], ["Izy = 0.00", 44], ["Izz = 0.01", 43]]} />
    </div>
  );
}

function MassDialog() {
  const btn = "flex items-center justify-center border border-[#d6d6d6] bg-[#e1e1e1] pt-px";
  return (
    <div className="absolute left-[884px] top-[6px] flex h-[759px] w-[519px] flex-col overflow-hidden border-x border-t border-[#6e6e6e] border-l-[#a8a8a8] bg-[#f0f0f0] text-[10.3px] text-[#111] shadow-[-1px_0_4px_rgba(0,0,0,0.25)]">
      <div className="flex h-[26px] w-full shrink-0 items-center bg-white pl-[5px]">
        <Icon n="scaleDark" s={15} />
        <Fit w={95} className="ml-[2px] text-[11px]">Propiedades físicas</Fit>
        <div className="flex-1" />
        <svg width="108" height="16" viewBox="0 0 108 16" className="mr-[8px] block" fill="none">
          <path d="M3 8.5H10" stroke="#222" strokeWidth="1.2" />
          <path d="M46.5 4.5H53.5V11.5H46.5Z" stroke="#d3d3d3" />
          <path d="M91 4.5L98 11.5M98 4.5L91 11.5" stroke="#222" strokeWidth="1.2" />
        </svg>
      </div>
      <div className="mt-[5px] flex h-[67px] shrink-0">
        <div className="w-[42px] pl-[14px] pt-[8px]"><Icon n="part" s={14} /></div>
        <div className="h-[67px] w-[286px] border border-[#5fb2e2] bg-[#cde3f8]">
          <div className="flex h-[16px] items-center border-y border-dashed border-t-[#4d7fa0] border-b-[#a4b9ca] pt-px">
            <Fit w={131}>barraPanel_Elevacion.SLDPRT</Fit>
          </div>
        </div>
        <div className={"ml-[31px] mt-[21px] h-[25px] w-[71px] border-r-[#adadad] " + btn}>
          <Fit w={49}><u>O</u>pciones...</Fit>
        </div>
      </div>
      <div className="ml-[42px] mt-[5px] flex h-[25px] shrink-0 gap-[5px]">
        <div className={"h-[25px] w-[195px] " + btn}><Fit w={173}>Reemplazar las propiedades de masa...</Fit></div>
        <div className={"h-[25px] w-[86px] " + btn}><Fit w={45}><u>R</u>ecalcular</Fit></div>
      </div>
      <Check on cls="ml-[42px] mt-[11px]"><Fit w={162}>Incluir sólidos/componentes ocu<u>l</u>tos</Fit></Check>
      <Check cls="ml-[42px] mt-[11px]"><Fit w={156}>Crear operación de centro de masa</Fit></Check>
      <Check cls="ml-[42px] mt-[12px]"><Fit w={170}>Mostrar masa de cordón de soldadura</Fit></Check>
      <div className="mt-[4px] flex h-[28px] shrink-0">
        <div className="flex w-[209px] flex-col items-end">
          <Fit w={161} className="h-[14px] leading-[14px]">Informar de valores de coordenadas</Fit>
          <Fit w={48} className="h-[14px] leading-[14px]">relativos a:</Fit>
        </div>
        <div className="ml-[13px] mt-[2px] flex h-[18px] w-[205px] items-center justify-between border border-[#dcdcdc] border-t-[#9f9f9f] bg-white pl-[3px] pr-[3px] pt-px">
          <Fit w={94}>-- predeterminado --</Fit>
          <svg width="9" height="8" viewBox="0 0 9 8"><path d="M1.5 2.5L4.5 5.5L7.5 2.5" fill="none" stroke="#aaa" /></svg>
        </div>
      </div>
      <Report />
    </div>
  );
}

export default function App() {
  return (
    <div className="relative flex h-[765px] w-[1403px] flex-col overflow-hidden bg-[#f3f3f3] font-['Open_Sans','Noto_Sans',sans-serif] text-black">
      <QuickBar />
      <Ribbon />
      <RibbonTabs />
      <div className="flex h-[647px] w-full shrink-0">
        <SidePanel />
        <Viewport />
      </div>
      <BottomTabs />
      <div className="w-full flex-1 border-t border-[#b5b5b5] bg-[#e6e6e6]" />
      <MassDialog />
    </div>
  );
}
